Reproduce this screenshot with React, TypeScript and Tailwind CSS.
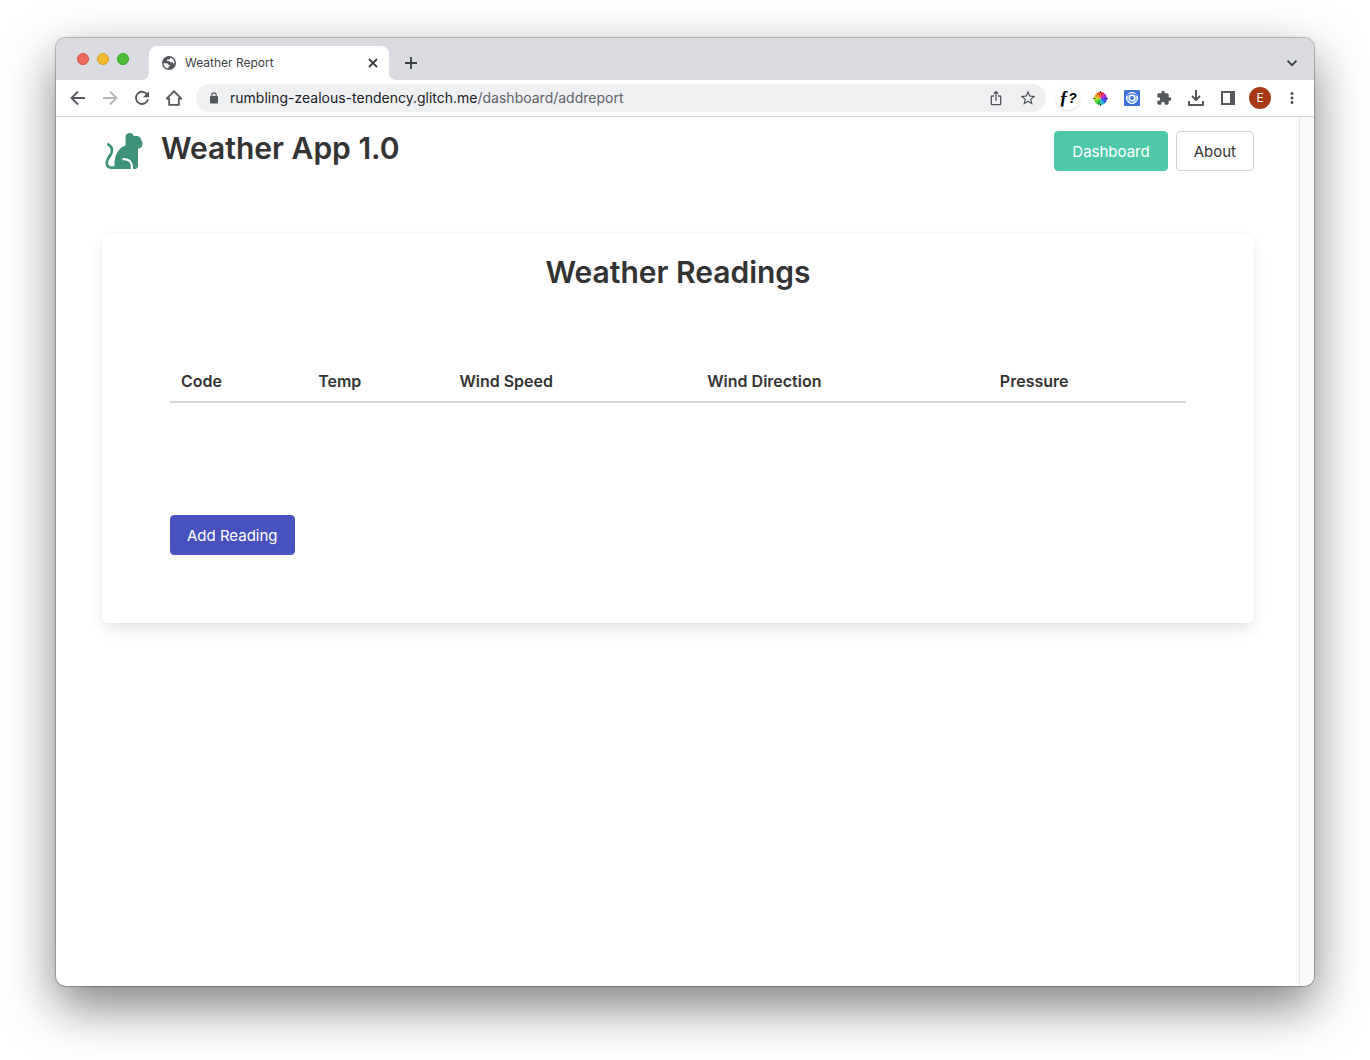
import React from 'react';
import { MdIosShare, MdStarOutline, MdExtension, MdMoreVert } from 'react-icons/md';

const COLUMNS = [
  { name: 'Code', width: 'w-[13.5%]' },
  { name: 'Temp', width: 'w-[13.9%]' },
  { name: 'Wind Speed', width: 'w-[24.4%]' },
  { name: 'Wind Direction', width: 'w-[28.8%]' },
  { name: 'Pressure', width: 'w-[19.4%]' },
];

const WHEEL = ['#e8202a', '#c01fd0', '#5a28e0', '#1f57e8', '#12b5c9', '#16a34a', '#4ad62a', '#b5d51c', '#f59a1b', '#f0501e'];

function ColorWheel() {
  const n = WHEEL.length;
  return (
    <svg width="15" height="15" viewBox="-7.5 -7.5 15 15" aria-hidden="true">
      {WHEEL.map((c, i) => {
        const a = (i / n) * Math.PI * 2 - Math.PI / 2;
        const b = ((i + 1) / n) * Math.PI * 2 - Math.PI / 2;
        return (
          <path
            key={c}
            fill={c}
            d={`M0 0L${6.5 * Math.cos(a)} ${6.5 * Math.sin(a)}A6.5 6.5 0 0 1 ${6.5 * Math.cos(b)} ${6.5 * Math.sin(b)}Z`}
          />
        );
      })}
      <path d="M0 -7.5V-5.5M0 5.500V7.500M-7.500 0H-5.500M5.500 0H7.500" stroke="#3b3b3b" strokeWidth="1" />
    </svg>
  );
}

function Monkey() {
  return (
    <svg width="38" height="38" viewBox="0 0 38 38" aria-hidden="true">
      <path
        d="M3.300 12.500C7 14.500 8.300 19 5.500 23C3 26.500 1.700 28 1.800 31C1.900 34 4 35.700 7 35.700H12"
        fill="none"
        stroke="#3e9279"
        strokeWidth="2.700"
        strokeLinecap="round"
      />
      <path
        fill="#3e9279"
        d="M20.500 13.500V5A4.200 4.200 0 0 1 28.700 3.900H31.500C34.300 3.900 36 5.500 36.300 8L37.400 10.500C38 14 36.300 16.500 33 16.500V33.500C33 35.800 32 37 29.500 37H28.200C28.200 29.500 25 25.700 17.500 26V28.300C22.500 28.300 25.700 30 25.700 33.500V37H9.500V32C9.500 24 12.500 16.500 20.500 13.500Z"
      />
    </svg>
  );
}

function Globe() {
  return (
    <svg width="14" height="14" viewBox="0 0 14 14" className="shrink-0" aria-hidden="true">
      <circle cx="7" cy="7" r="7" fill="#54575b" />
      <path
        d="M1.500 7.200H4.500C5.800 7.200 6.500 7.900 6.500 9H8V10.300H6.500V12.400A5.500 5.500 0 0 1 1.500 7.200Z"
        fill="#fff"
      />
      <path
        d="M8.400 1.700C8.400 3 7.800 3.500 6.500 3.500H5.200V5H6.500C7.500 5 8 5.500 8 6.200H10C10.700 6.200 11 6.700 11 7.500H12.400A5.500 5.500 0 0 0 8.400 1.700Z"
        fill="#fff"
      />
    </svg>
  );
}

function LineIcon({ d, children }: { d: string; children?: React.ReactNode }) {
  return (
    <svg width="16" height="16" viewBox="0 0 16 16" fill="none" stroke="currentColor" strokeWidth="1.800" aria-hidden="true">
      <path d={d} />
      {children}
    </svg>
  );
}

function IconButton({ label, children }: { label: string; children: React.ReactNode }) {
  return (
    <button type="button" aria-label={label} className="flex h-8 w-8 shrink-0 items-center justify-center text-[#54575b]">
      {children}
    </button>
  );
}

function TabStrip() {
  return (
    <div className="flex h-[42px] items-end bg-[#dadbe0]">
      <div className="flex w-[86px] shrink-0 gap-2 self-center pl-[21px]">
        <button type="button" aria-label="Close window" className="h-3 w-3 rounded-full border border-[#d5503f] bg-[#ed6a5e]" />
        <button type="button" aria-label="Minimise window" className="h-3 w-3 rounded-full border border-[#d69e28] bg-[#f4b92f]" />
        <button type="button" aria-label="Zoom window" className="h-3 w-3 rounded-full border border-[#39a125] bg-[#4dbd37]" />
      </div>
      <svg width="7" height="7" viewBox="0 0 7 7" aria-hidden="true">
        <path d="M7 0V7H0A7 7 0 0 0 7 0Z" fill="#fff" />
      </svg>
      <div className="flex h-[34px] w-60 items-center rounded-t-lg bg-white pr-2 pl-[13px]">
        <Globe />
        <span className="ml-[9px] flex-1 text-xs text-[#3c4043]">Weather Report</span>
        <button type="button" aria-label="Close tab" className="flex h-4 w-4 items-center justify-center text-[#3c4043]">
          <LineIcon d="M4 4L12 12M12 4L4 12" />
        </button>
      </div>
      <svg width="7" height="7" viewBox="0 0 7 7" aria-hidden="true">
        <path d="M0 0V7H7A7 7 0 0 1 0 0Z" fill="#fff" />
      </svg>
      <button type="button" aria-label="New tab" className="flex h-[34px] w-[30px] items-center justify-center text-[#3c4043]">
        <LineIcon d="M8 2V14M2 8H14" />
      </button>
      <button type="button" aria-label="Search tabs" className="mr-3 ml-auto flex h-[34px] w-5 items-center justify-center text-[#3c4043]">
        <LineIcon d="M3.500 5.700L8 10.200L12.500 5.700" />
      </button>
    </div>
  );
}

function Toolbar() {
  return (
    <div className="flex h-[37px] items-center border-b border-[#d5d6d9] bg-white px-1.5">
      <IconButton label="Back"><LineIcon d="M15 8H2.500M8 1.500L1.500 8L8 14.500" /></IconButton>
      <IconButton label="Forward">
        <span className="text-[#b4b6b9]"><LineIcon d="M1 8H13.500M8 1.500L14.500 8L8 14.500" /></span>
      </IconButton>
      <IconButton label="Reload">
        <LineIcon d="M13.300 4.700A6.100 6.100 0 1 0 14 9.300">
          <path d="M15 1.200V7.200H9Z" fill="currentColor" stroke="none" />
        </LineIcon>
      </IconButton>
      <IconButton label="Home"><LineIcon d="M0.700 8.600H3.200V14.900H12.800V8.600H15.300L8 1.300Z" /></IconButton>
      <div className="mx-1.5 flex h-7 min-w-0 flex-1 items-center rounded-full bg-[#eff0f2] pr-0.5 pl-[14px]">
        <svg width="8" height="12" viewBox="0 0 8 12" className="shrink-0 text-[#54575b]" aria-hidden="true">
          <rect y="4" width="8" height="7.500" rx="1" fill="currentColor" />
          <path d="M1.800 5V3A2.200 2.200 0 0 1 6.200 3V5" fill="none" stroke="currentColor" strokeWidth="1.200" />
        </svg>
        <span className="ml-3 flex-1 truncate text-sm text-[#5f6368]">
          <span className="text-[#202124]">rumbling-zealous-tendency.glitch.me</span>/dashboard/addreport
        </span>
        <IconButton label="Share"><MdIosShare size={16} /></IconButton>
        <IconButton label="Bookmark"><MdStarOutline size={18} /></IconButton>
      </div>
      <IconButton label="Font finder">
        <span className="flex h-6 w-6 items-center justify-center rounded-full bg-white font-['Liberation_Sans',sans-serif] text-sm font-bold text-black italic shadow">
          <span className="font-['Liberation_Serif',serif] text-lg leading-none">ƒ</span>?
        </span>
      </IconButton>
      <IconButton label="Colour picker"><ColorWheel /></IconButton>
      <IconButton label="Screen capture">
        <svg width="16" height="16" viewBox="0 0 16 16" aria-hidden="true">
          <rect width="16" height="16" rx="1" fill="#3c72d9" />
          <circle cx="8" cy="8" r="5.600" fill="#a9c3f3" stroke="#fff" strokeWidth="1" />
          <path d="M2.800 5.500C5 3.500 11 3.500 13.200 5.500M8 13L4.500 8.500" fill="none" stroke="#3c72d9" strokeWidth="1.200" />
          <circle cx="8" cy="8" r="2.600" fill="#3c72d9" stroke="#fff" strokeWidth="1.300" />
        </svg>
      </IconButton>
      <IconButton label="Extensions"><MdExtension size={16} /></IconButton>
      <IconButton label="Downloads">
        <svg width="16" height="16" viewBox="0 0 16 16" fill="none" stroke="currentColor" strokeWidth="2" strokeLinejoin="round" aria-hidden="true">
          <path d="M8 0V10M4 6L8 10L12 6M1 11V15H15V11" />
        </svg>
      </IconButton>
      <IconButton label="Side panel">
        <svg width="14" height="14" viewBox="0 0 14 14" fill="currentColor" aria-hidden="true">
          <path fillRule="evenodd" d="M0 0H14V14H0ZM2 2V12H9V2Z" />
        </svg>
      </IconButton>
      <IconButton label="Profile">
        <span className="flex h-[22px] w-[22px] items-center justify-center rounded-full bg-[#a83a15] text-xs text-white">E</span>
      </IconButton>
      <IconButton label="Menu"><MdMoreVert size={18} /></IconButton>
    </div>
  );
}

export default function App() {
  return (
    <div className="flex min-h-screen bg-white px-14 pt-[38px] pb-[74px] font-['Inter',sans-serif]">
      <div className="flex flex-1 flex-col overflow-hidden rounded-[10px] bg-white shadow-[0_0_1px_1px_rgba(0,0,0,0.25),0_20px_50px_rgba(0,0,0,0.5)]">
        <TabStrip />
        <Toolbar />
        <div className="flex flex-1">
          <main className="flex-1 pt-3.5 pr-[45px] pl-[46px] text-[#333]">
            <header className="flex items-start">
              <div className="pt-px pl-[3px]"><Monkey /></div>
              <h1 className="ml-[18px] text-[30px] leading-[34px] font-semibold">Weather App 1.0</h1>
              <nav className="ml-auto flex gap-2">
                <a href="#dashboard" className="flex h-10 items-center rounded border border-[#4fc8a9] bg-[#4fc8a9] px-[17px] pt-0.5 text-[15px] text-white">Dashboard</a>
                <a href="#about" className="flex h-10 items-center rounded border border-[#d3d3d3] px-[17px] pt-0.5 text-[15px]">About</a>
              </nav>
            </header>
            <section className="mt-[62px] rounded-md px-[68px] pt-5 pb-[68px] shadow-[0_8px_16px_-2px_rgba(10,10,10,0.1),0_0_0_1px_rgba(10,10,10,0.02)]">
              <h2 className="text-center text-[30px] leading-[38px] font-semibold">Weather Readings</h2>
              <table className="mt-[70px] w-full table-fixed border-collapse text-left">
                <thead>
                  <tr className="border-b-2 border-[#d6d6d6]">
                    {COLUMNS.map((c) => (
                      <th key={c.name} scope="col" className={`${c.width} px-[11px] pt-2 pb-2 text-base font-semibold`}>
                        {c.name}
                      </th>
                    ))}
                  </tr>
                </thead>
              </table>
              <button type="button" className="mt-28 flex h-10 items-center rounded border border-[#4752bf] bg-[#4752bf] px-4 pt-0.5 text-[15px] text-white">
                Add Reading
              </button>
            </section>
          </main>
          <div className="w-[15px] shrink-0 border-l border-[#e4e4e4] bg-[#f9f9f9]" />
        </div>
      </div>
    </div>
  );
}
